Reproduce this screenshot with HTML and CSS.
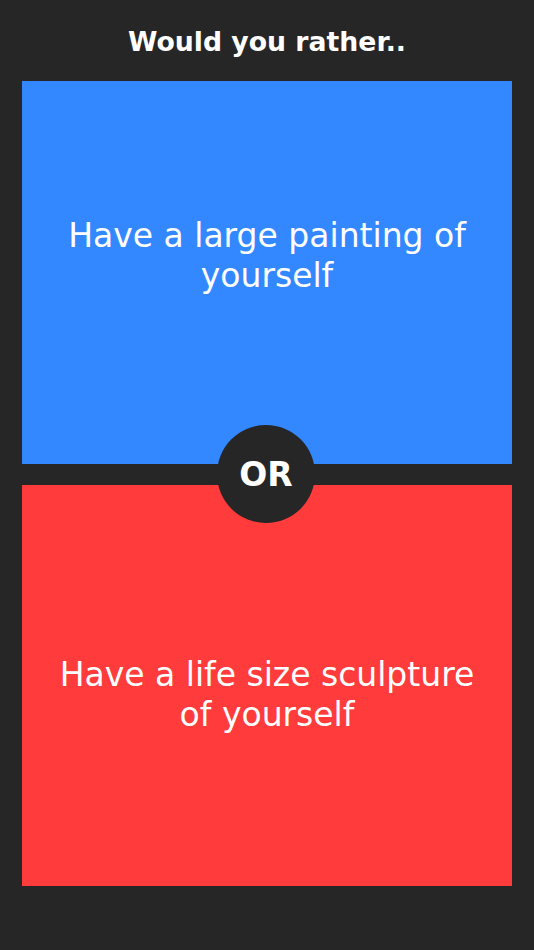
FILE: index.html
```html
<!DOCTYPE html>
<html>
<head>
<meta charset="utf-8">
<link rel="stylesheet" href="styles.css">
</head>
<body>
<div class="app">
  <header class="title">Would you rather..</header>
  <main class="choices">
    <section class="choice choice-blue"><p>Have a large painting of yourself</p></section>
    <section class="choice choice-red"><p>Have a life size sculpture of yourself</p></section>
    <div class="or">OR</div>
  </main>
</div>
</body>
</html>
```
FILE: styles.css
```css
html, body {
  margin: 0;
  padding: 0;
  background: #262626;
}
.app {
  width: 534px;
  height: 950px;
  display: flex;
  flex-direction: column;
  font-family: "DejaVu Sans", "Open Sans", sans-serif;
  color: #fff;
}
.title {
  height: 81px;
  display: flex;
  align-items: center;
  justify-content: center;
  font-weight: bold;
  font-size: 26.7px;
  padding-top: 2px;
  box-sizing: border-box;
}
.choices {
  position: relative;
  margin: 0 22px;
  display: flex;
  flex-direction: column;
  gap: 21px;
}
.choice {
  display: flex;
  align-items: center;
  justify-content: center;
  text-align: center;
  box-sizing: border-box;
  padding-left: 30px;
  padding-right: 30px;
}
.choice p {
  margin: 0;
  font-size: 33px;
  line-height: 40px;
}
.choice-blue {
  background: #3388ff;
  height: 383px;
  padding-bottom: 34px;
}
.choice-red {
  background: #ff3b3b;
  height: 401px;
  padding-top: 18px;
}
.or {
  position: absolute;
  left: 50%;
  top: 344px;
  width: 98px;
  height: 98px;
  margin-left: -50px;
  border-radius: 50%;
  background: #262626;
  display: flex;
  align-items: center;
  justify-content: center;
  font-weight: bold;
  font-size: 33px;
}
```
